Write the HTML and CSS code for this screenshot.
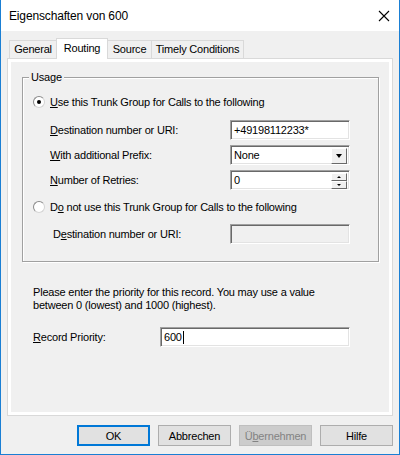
FILE: index.html
```
<!DOCTYPE html>
<html lang="de">
<head>
    <meta charset="UTF-8">
    <title>Eigenschaften von 600</title>
    <link rel="stylesheet" href="styles.css">
</head>
<body>
    <div class="window">
        <div class="titlebar">
            <span class="title">Eigenschaften von 600</span>
            <svg class="close" width="12" height="12" viewBox="0 0 12 12">
                <path d="M1 1 L11 11 M11 1 L1 11" stroke="#000" stroke-width="1.1" fill="none"/>
            </svg>
        </div>

        <div class="tabs">
            <div class="tab">General</div>
            <div class="tab active">Routing</div>
            <div class="tab">Source</div>
            <div class="tab">Timely Conditions</div>
        </div>

        <div class="panel">
            <div class="group">
                <div class="group-title">Usage</div>

                <div class="radio-row first">
                    <span class="radio checked"></span>
                    <span><u>U</u>se this Trunk Group for Calls to the following</span>
                </div>

                <div class="field">
                    <label><u>D</u>estination number or URI:</label>
                    <div class="edit">+49198112233*</div>
                </div>
                <div class="field">
                    <label><u>W</u>ith additional Prefix:</label>
                    <div class="edit combo">None<span class="drop"><span class="tri"></span></span></div>
                </div>
                <div class="field">
                    <label><u>N</u>umber of Retries:</label>
                    <div class="edit spin">0<span class="spin-btns"><span class="up"><span class="tri-up"></span></span><span class="down"><span class="tri-small"></span></span></span></div>
                </div>

                <div class="radio-row">
                    <span class="radio"></span>
                    <span>D<u>o</u> not use this Trunk Group for Calls to the following</span>
                </div>

                <div class="field off">
                    <label>D<u>e</u>stination number or URI:</label>
                    <div class="edit disabled"></div>
                </div>
            </div>

            <p class="note">Please enter the priority for this record. You may use a value between 0 (lowest) and 1000 (highest).</p>

            <div class="field priority">
                <label><u>R</u>ecord Priority:</label>
                <div class="edit">600<span class="caret"></span></div>
            </div>
        </div>

        <div class="buttons">
            <button class="btn default">OK</button>
            <button class="btn">Abbrechen</button>
            <button class="btn" disabled>Ü<u>b</u>ernehmen</button>
            <button class="btn">Hilfe</button>
        </div>
    </div>
</body>
</html>
```

FILE: styles.css
```
body {
    margin: 0;
    font-family: "Liberation Sans", Arial, sans-serif;
    font-size: 11px;
    letter-spacing: -0.2px;
    color: #000;
}

.window {
    width: 400px;
    height: 455px;
    box-sizing: border-box;
    border: 1px solid #1a7fd4;
    border-top: none;
    background: #f0f0f0;
}

.titlebar {
    height: 31px;
    background: #fff;
    display: flex;
    align-items: center;
    justify-content: space-between;
    padding: 0 9px 0 8px;
}

.title {
    font-size: 12px;
    letter-spacing: -0.15px;
}

.close {
    margin-top: 1px;
}

/* Reiter */
.tabs {
    display: flex;
    align-items: flex-end;
    height: 20px;
    margin-top: 7px;
    padding-left: 8px;
    position: relative;
    z-index: 1;
}

.tab {
    box-sizing: border-box;
    height: 18px;
    line-height: 17px;
    text-align: center;
    border: 1px solid #d9d9d9;
    border-bottom: none;
    border-left: none;
    background: #f0f0f0;
}

.tab:first-child {
    border-left: 1px solid #d9d9d9;
    width: 48px;
}

.tab:nth-child(2) {
    width: 52px;
    margin-left: -1px;
}

.tab:nth-child(3) {
    width: 44px;
}

.tab:nth-child(4) {
    width: 92px;
}

.tab.active {
    height: 21px;
    line-height: 18px;
    margin-bottom: -1px;
    background: #fff;
    border-left: 1px solid #d9d9d9;
}

.panel {
    box-sizing: border-box;
    width: 386px;
    height: 358px;
    margin-left: 6px;
    border: 1px solid #d9d9d9;
    box-shadow: inset 0 0 0 3px #fff;
    padding: 18px 14px 0;
}

/* Gruppe */
.group {
    box-sizing: border-box;
    width: 357px;
    height: 185px;
    border: 1px solid #a0a0a0;
    box-shadow: inset 1px 1px #fff, 1px 1px #fff;
}

.group-title {
    width: fit-content;
    margin: -7px 0 0 6px;
    padding: 0 2px;
    line-height: 13px;
    background: #f0f0f0;
}

.radio-row {
    display: flex;
    align-items: center;
    gap: 5px;
    height: 20px;
    margin-top: 7px;
    padding-left: 10px;
}

.radio-row.first {
    margin-top: 8px;
}

.radio {
    box-sizing: border-box;
    width: 12px;
    height: 12px;
    border-radius: 50%;
    border: 1px solid #8a8a8a;
    border-right-color: #d4d4d4;
    border-bottom-color: #d4d4d4;
    background: #fff;
    display: flex;
    align-items: center;
    justify-content: center;
}

.radio.checked::after {
    content: "";
    width: 4px;
    height: 4px;
    border-radius: 50%;
    background: #000;
}

.field {
    display: grid;
    grid-template-columns: 180px 120px;
    align-items: center;
    height: 20px;
    margin-top: 5px;
    padding-left: 27px;
}

.radio-row + .field {
    margin-top: 8px;
}

.field.off {
    margin-top: 7px;
}

.field.off label {
    padding-left: 3px;
}

.edit {
    box-sizing: border-box;
    height: 20px;
    display: flex;
    align-items: center;
    padding-left: 3px;
    background: #fff;
    border: 1px solid;
    border-color: #a0a0a0 #fff #fff #a0a0a0;
    box-shadow: inset 1px 1px #696969, inset -1px -1px #e3e3e3;
    position: relative;
}

.edit.disabled {
    background: #f0f0f0;
}

.drop {
    position: absolute;
    right: 2px;
    top: 2px;
    box-sizing: border-box;
    width: 16px;
    height: 16px;
    background: #f0f0f0;
    border: 1px solid;
    border-color: #fff #696969 #696969 #fff;
    display: flex;
    align-items: center;
    justify-content: center;
}

.tri {
    border-left: 3.5px solid transparent;
    border-right: 3.5px solid transparent;
    border-top: 4px solid #000;
}

.spin-btns {
    position: absolute;
    right: 2px;
    top: 2px;
    display: flex;
    flex-direction: column;
}

.spin-btns span.up,
.spin-btns span.down {
    box-sizing: border-box;
    width: 16px;
    height: 8px;
    background: #f0f0f0;
    border: 1px solid;
    border-color: #fff #696969 #696969 #fff;
    display: flex;
    align-items: center;
    justify-content: center;
}

.tri-up {
    border-left: 2px solid transparent;
    border-right: 2px solid transparent;
    border-bottom: 2px solid #000;
}

.tri-small {
    border-left: 2px solid transparent;
    border-right: 2px solid transparent;
    border-top: 2px solid #000;
}

.note {
    margin: 24px 0 0 11px;
    width: 320px;
    line-height: 13px;
}

.priority {
    grid-template-columns: 127px 190px;
    margin-top: 15px;
    padding-left: 11px;
}

.caret {
    width: 1px;
    height: 13px;
    background: #000;
    margin-left: 1px;
}

/* Knöpfe */
.buttons {
    display: flex;
    justify-content: flex-end;
    gap: 8px;
    margin-top: 9px;
    padding-right: 6px;
}

.btn {
    box-sizing: border-box;
    width: 73px;
    height: 21px;
    padding: 0;
    font: inherit;
    letter-spacing: inherit;
    color: #000;
    background: #e1e1e1;
    border: 1px solid #adadad;
}

.btn.default {
    border: 2px solid #0078d7;
}

.btn:disabled {
    background: #cccccc;
    border-color: #bfbfbf;
    color: #838383;
}
```
